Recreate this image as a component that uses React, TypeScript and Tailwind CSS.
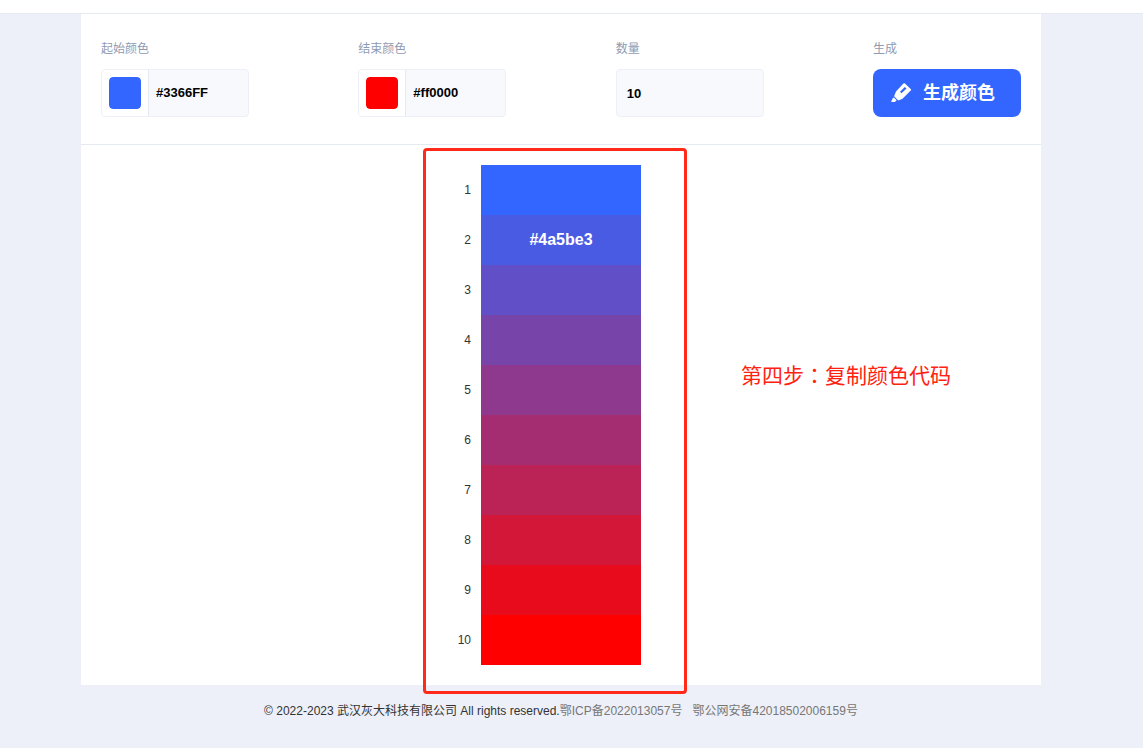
import * as React from "react";
import clsx from "clsx";

function channels(hex: string) {
  return [1, 3, 5].map((i) => parseInt(hex.slice(i, i + 2), 16));
}

function makeSteps(start: string, end: string, count: number) {
  const a = channels(start);
  const b = channels(end);
  return Array.from({ length: count }, (_, i) => {
    const t = count > 1 ? i / (count - 1) : 0;
    return "#" + a.map((v, c) => Math.round(v + (b[c] - v) * t).toString(16).padStart(2, "0")).join("");
  });
}

function MarkerIcon() {
  return (
    <svg viewBox="0 0 22 20" className="h-5 w-[22px]" aria-hidden="true">
      <path
        fill="currentColor"
        fillRule="evenodd"
        d="M12.4.6a1.2 1.2 0 0 1 1.6 0l5.7 5.3a1.2 1.2 0 0 1 0 1.7l-8.2 8.2-3.6 1.5a1 1 0 0 1-1.1-.2l-3.3-3.3a1 1 0 0 1-.2-1.1l1.7-4.2zM13.8 4 9 8.8l1.5 1.5L15.5 5.5zM1.9 14.9a1 1 0 0 1 1.4 0l1.9 1.9a.7.7 0 0 1 0 1l-.8.8a1 1 0 0 1-.7.3H.9a.6.6 0 0 1-.5-.9z"
      />
    </svg>
  );
}

function Field({ id, label, children }: { id: string; label: string; children: React.ReactNode }) {
  return (
    <div className="w-[148px]">
      <label htmlFor={id} className="block text-xs leading-4 text-[#8f9bb3]">
        {label}
      </label>
      <div className="mt-3">{children}</div>
    </div>
  );
}

function ColorInput({
  id,
  label,
  value,
  onChange,
}: {
  id: string;
  label: string;
  value: string;
  onChange: (value: string) => void;
}) {
  return (
    <div className="flex h-12 overflow-hidden rounded border border-[#edf1f7] bg-[#f7f9fc]">
      <div className="flex w-[47px] shrink-0 items-center justify-center border-r border-[#e4e9f2] bg-white">
        <input
          type="color"
          aria-label={label}
          value={value.toLowerCase()}
          onChange={(e) => onChange(e.target.value)}
          className="h-8 w-8 cursor-pointer appearance-none rounded bg-transparent p-0 [&::-webkit-color-swatch-wrapper]:p-0 [&::-webkit-color-swatch]:rounded [&::-webkit-color-swatch]:border-0"
        />
      </div>
      <input
        id={id}
        type="text"
        value={value}
        onChange={(e) => onChange(e.target.value)}
        className="min-w-0 flex-1 px-[7px] text-[13px] font-bold text-black outline-none"
      />
    </div>
  );
}

export default function App() {
  const [start, setStart] = React.useState("#3366FF");
  const [end, setEnd] = React.useState("#ff0000");
  const [count, setCount] = React.useState("10");
  const [colors, setColors] = React.useState(() => makeSteps("#3366FF", "#ff0000", 10));
  const [active, setActive] = React.useState(1);

  const generate = () => {
    const valid = /^#[0-9a-f]{6}$/i;
    if (!valid.test(start) || !valid.test(end)) return;
    setColors(makeSteps(start, end, Math.max(1, Number(count) || 1)));
  };

  return (
    <div className="min-h-screen bg-[#edf0f8] font-['Liberation_Sans','Noto_Sans_CJK_SC',sans-serif] text-xs text-[#333]">
      <header className="h-3.5 border-b border-[#e4e9f2] bg-white" />

      <div className="pr-[21px]">
        <main className="mx-auto max-w-[960px] bg-white">
          <div className="flex justify-between border-b border-[#e4e9f2] px-5 pt-[27px] pb-[27px]">
            <Field id="start" label="起始颜色">
              <ColorInput id="start" label="选择起始颜色" value={start} onChange={setStart} />
            </Field>
            <Field id="end" label="结束颜色">
              <ColorInput id="end" label="选择结束颜色" value={end} onChange={setEnd} />
            </Field>
            <Field id="count" label="数量">
              <input
                id="count"
                type="text"
                value={count}
                onChange={(e) => setCount(e.target.value)}
                className="h-12 w-full rounded border border-[#edf1f7] bg-[#f7f9fc] px-2.5 text-[13px] font-bold text-black outline-none"
              />
            </Field>
            <Field id="generate" label="生成">
              <button
                id="generate"
                type="button"
                onClick={generate}
                className="flex h-12 w-full cursor-pointer items-center justify-center gap-2.5 rounded-lg bg-[#3366ff] pr-2 text-lg font-bold text-white"
              >
                <MarkerIcon />
                生成颜色
              </button>
            </Field>
          </div>

          <div className="relative py-5">
            <ol>
              {colors.map((color, i) => (
                <li key={i} className="grid h-[50px] grid-cols-[1fr_160px_1fr] items-center">
                  <span className="pr-2.5 text-right">{i + 1}</span>
                  <button
                    type="button"
                    aria-label={color}
                    onMouseEnter={() => setActive(i)}
                    onClick={() => navigator.clipboard?.writeText(color)}
                    className="h-full cursor-pointer text-base font-bold text-white"
                    style={{ backgroundColor: color }}
                  >
                    <span className={clsx(active !== i && "hidden")}>{color}</span>
                  </button>
                </li>
              ))}
            </ol>

            {/* tutorial marks over the list */}
            <div className="pointer-events-none absolute -bottom-[9px] left-1/2 top-[3px] ml-[-138px] w-[264px] rounded border-3 border-[#ff2a1a]" />
            <p className="absolute left-1/2 top-[213px] ml-[180px] font-['Noto_Sans_CJK_TC',sans-serif] text-[21px] leading-8 whitespace-nowrap text-[#ff2211]">
              第四步：复制颜色代码
            </p>
          </div>
        </main>

        <footer className="py-4 text-center leading-5">
          © 2022-2023 武汉灰大科技有限公司 All rights reserved.
          <a href="#icp" className="text-[#777]">
            鄂ICP备2022013057号
          </a>
          <a href="#police" className="ml-2.5 text-[#777]">
            鄂公网安备42018502006159号
          </a>
        </footer>
      </div>
    </div>
  );
}
